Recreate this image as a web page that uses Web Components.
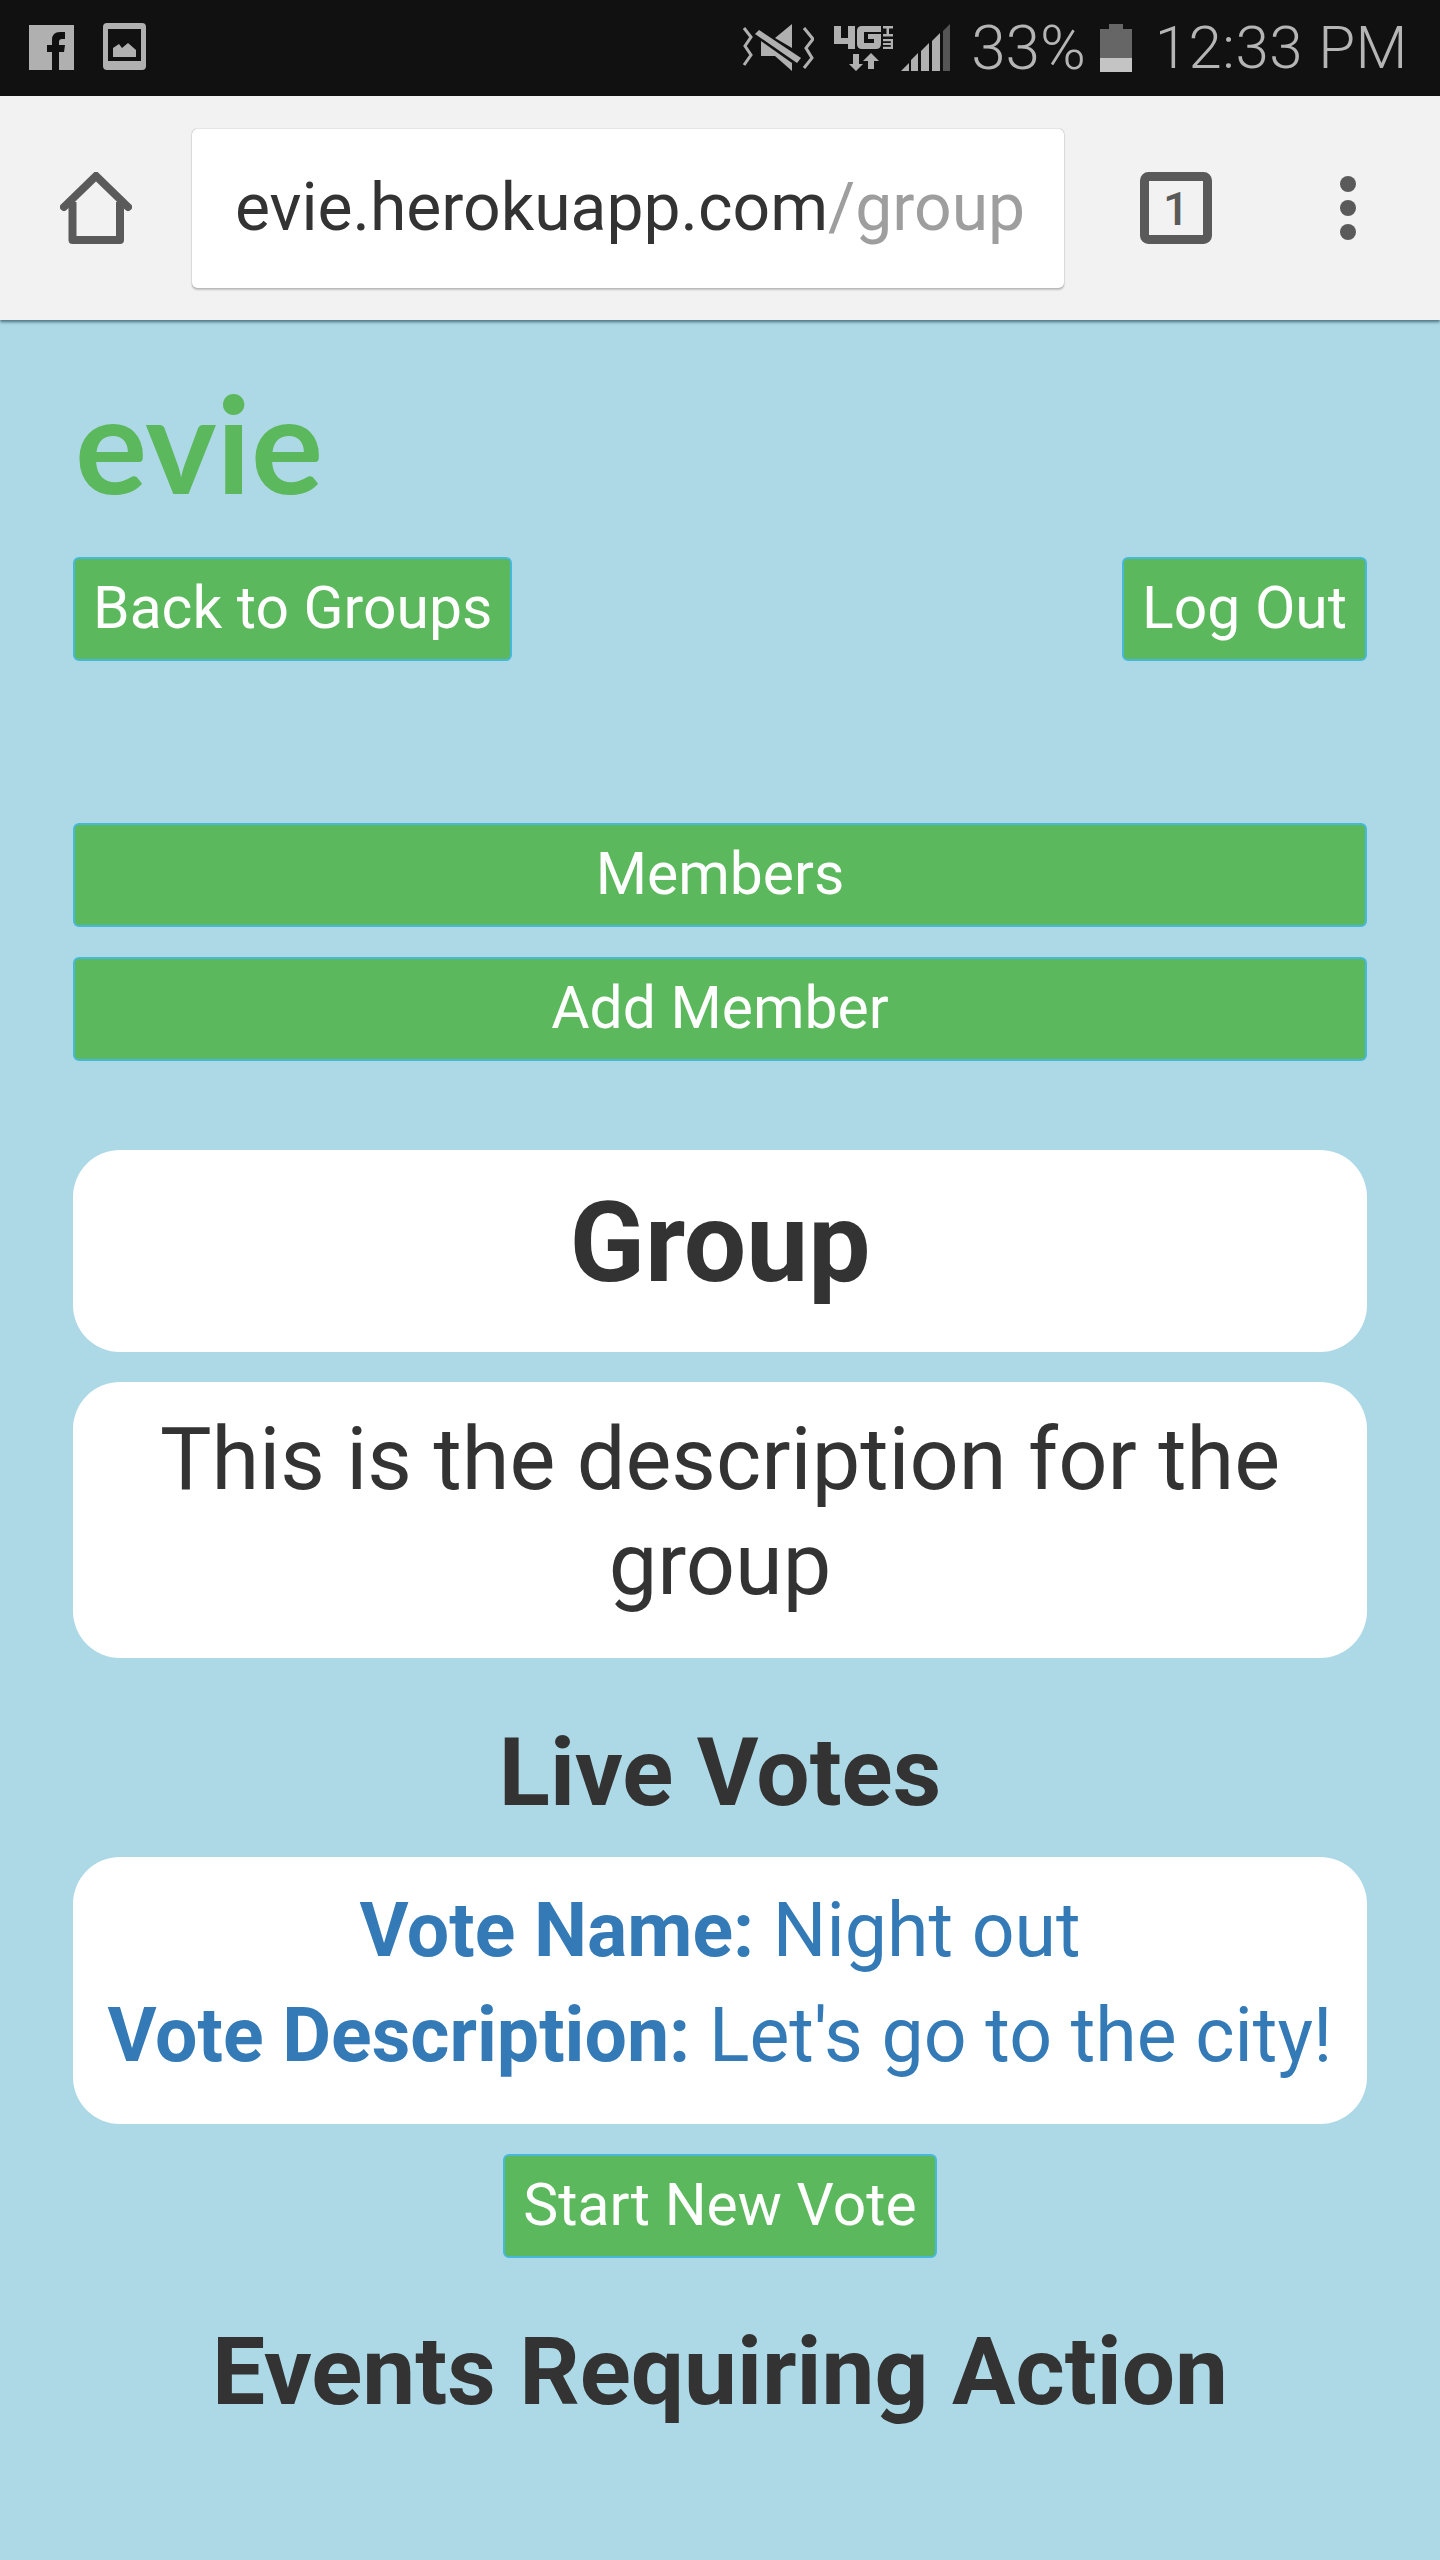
<!DOCTYPE html>
<html><head><meta charset="utf-8">
<style>
html,body{margin:0;padding:0;background:#add8e6;}
body{font-family:Roboto,"Liberation Sans",sans-serif;color:#333;}
</style></head>
<body>
<template id="t-status"><style>
:host{display:flex;align-items:center;height:96px;background:#111;color:#b5b5b5;padding:0 32px 0 29px;box-sizing:border-box;font-size:60px;font-weight:300;line-height:96px}
svg{display:block;flex:none}
.sp{flex:1}
.pct{margin-left:21px;font-size:62px}
.time{margin-left:23px;letter-spacing:.5px}
</style>
<svg width="45" height="45" viewBox="0 0 45 45" style="margin-top:-2px"><rect width="45" height="45" fill="#b0b0b0"/><path fill="#111" d="M23 45V27H18V20H23V15Q23 7 31 7H36V14H33Q30 14 30 17V20H36L35 27H30V45Z"/></svg>
<svg width="43" height="47" viewBox="0 0 43 47" style="margin-left:29px;margin-top:-3px"><path fill="#b0b0b0" fill-rule="evenodd" d="M4 0H39Q43 0 43 4V43Q43 47 39 47H4Q0 47 0 43V4Q0 0 4 0ZM5 6V38H38V6Z"/><path fill="#b0b0b0" d="M10 34V25L16 21L19 25L25 20L33 27V34Z"/></svg>
<span class="sp"></span>
<svg width="72" height="48" viewBox="0 0 72 48"><path fill="none" stroke="#b0b0b0" stroke-width="3" d="M2 4L9 13L3 22L9 31L2 41M62 4L71 15L64 24L70 34L62 44"/><path fill="#b0b0b0" d="M50 0V24L33 14ZM19 17V32H33L50 47V39Z"/><path fill="#b0b0b0" d="M13 10L17 6L59 34L55 39Z"/></svg>
<svg width="61" height="48" viewBox="0 0 61 48" style="margin-left:19px"><path fill="#b0b0b0" d="M1 2H8V14H15V2H22V25H15V20H1ZM24 7Q24 2 29 2H48V8H31V19H41V15H35V10H48V20Q48 25 43 25H29Q24 25 24 20Z"/><path fill="#b0b0b0" d="M50 2H60V4.500H50ZM53.500 4.500H56V10.500H53.500ZM50 10H60V12.500H50ZM50 15H60V25H50V22.700H57.800V21H50V19H57.800V17.300H50Z"/><path fill="#b0b0b0" d="M20 30H26V40H30L23 47L16 40H20ZM35 45V37H30L38 29L46 37H41V45Z"/></svg>
<svg width="49" height="48" viewBox="0 0 49 48" style="margin-left:7px"><path fill="#b0b0b0" d="M0 47L8 39V47ZM10 36L17 29V47H10ZM20 27L28 19V47H20ZM31 17L39 9V47H31Z"/><path fill="#555" d="M42 7L49 0V47H42Z"/></svg>
<span class="pct">33%</span>
<svg width="32" height="48" viewBox="0 0 32 48" style="margin-left:14px"><path fill="#666" d="M9 0H23V5H32V34H0V5H9Z"/><rect y="34" width="32" height="14" fill="#c4c4c4"/></svg>
<span class="time">12:33 PM</span>
</template>

<template id="t-toolbar"><style>
:host{display:flex;align-items:center;height:224px;background:#f2f2f2;box-shadow:0 2px 3px rgba(40,80,95,.75);position:relative;padding:0 0 0 60px;box-sizing:border-box}
svg{display:block;flex:none}
.url{margin-left:60px;width:872px;height:159px;flex:none;box-sizing:border-box;background:#fff;border-radius:5px;box-shadow:0 0 1px rgba(0,0,0,.5),0 2px 2px rgba(0,0,0,.2);padding:0 41px 0 43px;display:flex;align-items:center}
.clip{font-size:66px;line-height:80px;color:#333;white-space:nowrap;overflow:hidden;width:100%;font-weight:400}
::slotted(span){color:#9e9e9e}
.tab{margin-left:76px}
.dots{margin-left:128px}
.n{font-size:46px;font-weight:500;fill:#5a5a5a;font-family:Roboto,sans-serif}
</style>
<svg width="72" height="72" viewBox="0 0 72 72"><path fill="none" stroke="#5a5a5a" stroke-width="8" stroke-linecap="round" d="M4 35L36 4L68 35"/><path fill="none" stroke="#5a5a5a" stroke-width="8" stroke-linejoin="round" d="M12.500 30V68H60V30"/></svg>
<div class="url"><div class="clip"><slot></slot></div></div>
<svg class="tab" width="72" height="72" viewBox="0 0 72 72"><rect x="4.500" y="4.500" width="63" height="63" rx="4" fill="none" stroke="#5a5a5a" stroke-width="9"/><text class="n" x="36" y="53" text-anchor="middle">1</text></svg>
<svg class="dots" width="16" height="64" viewBox="0 0 16 64"><g fill="#5a5a5a"><circle cx="8" cy="8" r="8"/><circle cx="8" cy="32" r="8"/><circle cx="8" cy="56" r="8"/></g></svg>
</template>

<template id="t-btn"><style>
:host{display:block;box-sizing:border-box;height:104px;background:#5cb85c;border:2px solid #46b8da;border-radius:6px;color:#fff;font-size:58.800px;line-height:96px;text-align:center;padding:1px 18px;white-space:nowrap}
:host([inline]){display:inline-block}
</style><slot></slot></template>

<template id="t-card"><style>
:host{display:block;background:#fff;border-radius:47px;text-align:center;box-sizing:border-box;padding:var(--pad,0 30px)}
</style><slot></slot></template>

<template id="t-app"><style>
:host{display:flex;flex-direction:column;padding:0 73px;box-sizing:border-box;min-height:2240px}
.logo{font-family:Lato,"Noto Sans",sans-serif;font-weight:700;font-size:135px;line-height:130px;color:#5cb85c;margin-top:57px;margin-left:2px;height:180px}
.top{display:flex;justify-content:space-between}
.stack{display:flex;flex-direction:column;gap:30px;margin-top:162px}
.cards{display:flex;flex-direction:column;gap:30px;margin-top:89px}
h1{margin:0;font-size:110.700px;line-height:111px;font-weight:700;color:#333}
h2{margin:0;text-align:center;font-size:94.500px;line-height:100px;font-weight:700;color:#333}
p{margin:0;font-size:86.500px;line-height:105px;font-weight:400;color:#333}
.v{font-size:75.200px;line-height:105px;color:#337ab7;white-space:nowrap}
b{font-weight:700}
.lv{margin-top:65px;margin-bottom:34px}
.sn{display:flex;justify-content:center;margin-top:30px}
.ev{margin-top:64px}
</style>
<div class="logo">evie</div>
<div class="top"><x-btn inline>Back to Groups</x-btn><x-btn inline>Log Out</x-btn></div>
<div class="stack"><x-btn>Members</x-btn><x-btn>Add Member</x-btn></div>
<div class="cards">
<x-card style="--pad:38px 30px 53px"><h1>Group</h1></x-card>
<x-card style="--pad:25px 30px 41px"><p>This is the description for the group</p></x-card>
</div>
<h2 class="lv">Live Votes</h2>
<x-card style="--pad:21px 0 36px"><div class="v"><b>Vote Name:</b> Night out</div><div class="v"><b>Vote Description:</b> Let's go to the city!</div></x-card>
<div class="sn"><x-btn inline>Start New Vote</x-btn></div>
<h2 class="ev">Events Requiring Action</h2>
</template>

<x-status></x-status>
<x-toolbar>evie.herokuapp.com<span>/groups/1</span></x-toolbar>
<x-app></x-app>

<script>
for (const [name,id] of [['x-status','t-status'],['x-toolbar','t-toolbar'],['x-btn','t-btn'],['x-card','t-card'],['x-app','t-app']]) {
  customElements.define(name, class extends HTMLElement {
    constructor(){super();this.attachShadow({mode:'open'}).appendChild(document.getElementById(id).content.cloneNode(true));}
  });
}
</script>
</body></html>
